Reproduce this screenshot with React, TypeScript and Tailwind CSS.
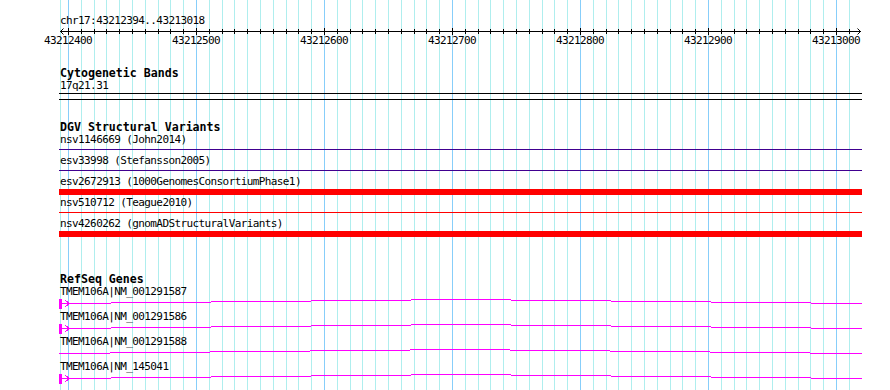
import React from 'react';

const MONO = "'DejaVu Sans Mono', 'Liberation Mono', monospace";

// 10bp per tick, 1.28px per bp, 43212400 sits at x=68
const ticks = Array.from({ length: 62 }, (_, k) => ({
  x: Math.round(68 + 12.8 * k),
  major: k % 10 === 0,
  label: 43212400 + k * 10,
}));

const variants = [
  { label: 'nsv1146669 (John2014)', color: 'bg-[#400090]', thick: false },
  { label: 'esv33998 (Stefansson2005)', color: 'bg-[#400090]', thick: false },
  { label: 'esv2672913 (1000GenomesConsortiumPhase1)', color: 'bg-[#ff0000]', thick: true },
  { label: 'nsv510712 (Teague2010)', color: 'bg-[#ff0000]', thick: false },
  { label: 'nsv4260262 (gnomADStructuralVariants)', color: 'bg-[#ff0000]', thick: true },
];

const genes = [
  { label: 'TMEM106A|NM_001291587', start: true, edges: [59, 111, 211, 311, 411, 511, 611, 711, 811, 862] },
  { label: 'TMEM106A|NM_001291586', start: true, edges: [59, 111, 211, 311, 411, 511, 611, 711, 811, 862] },
  { label: 'TMEM106A|NM_001291588', start: false, edges: [59, 110, 210, 310, 410, 510, 610, 710, 810, 862] },
  { label: 'TMEM106A|NM_145041', start: true, edges: [59, 111, 211, 311, 411, 511, 611, 711, 811, 862] },
];

const rise = [0, -1, -2, -3, -4, -3, -2, -1, 0];

function TrackTitle({ children, className = '' }: { children: React.ReactNode; className?: string }) {
  return (
    <div
      className={`ml-[60px] h-[13px] text-[11.6px] leading-[13px] font-bold whitespace-nowrap text-black font-['DejaVu_Sans_Mono',monospace] ${className}`}
    >
      {children}
    </div>
  );
}

function Label({ children }: { children: React.ReactNode }) {
  return (
    <div className="ml-[60px] h-[12px] text-[11px] leading-[12px] tracking-[-0.6px] whitespace-nowrap text-black font-['DejaVu_Sans_Mono',monospace]">
      {children}
    </div>
  );
}

function GeneGlyph({ edges, start }: { edges: number[]; start: boolean }) {
  return (
    <svg width={890} height={13} className="block" shapeRendering="crispEdges">
      {edges.slice(0, -1).map((x, i) => (
        <rect key={x} x={x} y={5 + rise[i]} width={edges[i + 1] - x} height={1} fill="#ff00ff" />
      ))}
      {start && (
        <>
          <rect x={59} y={1} width={3} height={10} fill="#ff00ff" />
          <polyline points="65.5,2.5 69.5,5.5 65.5,8.5" fill="none" stroke="#ff00ff" strokeWidth={1} />
        </>
      )}
    </svg>
  );
}

export default function App() {
  return (
    <div className="relative w-[890px] h-[390px] overflow-hidden bg-white">
      {/* grid behind the tracks */}
      <svg width={890} height={390} className="absolute inset-0" shapeRendering="crispEdges">
        <rect x={60} y={0} width={1} height={390} fill="#afeeee" />
        {ticks.map((t) => (
          <rect key={t.x} x={t.x} y={0} width={1} height={390} fill={t.major ? '#87cefa' : '#afeeee'} />
        ))}
      </svg>

      <div className="relative flex flex-col pt-[15px]">
        <Label>chr17:43212394..43213018</Label>

        {/* ruler */}
        <svg width={890} height={20} className="block">
          <g shapeRendering="crispEdges">
            <rect x={60} y={4} width={801} height={1} fill="#000" />
            {ticks.map((t) => (
              <rect key={t.x} x={t.x} y={t.major ? 1 : 2} width={1} height={t.major ? 7 : 5} fill="#000" />
            ))}
          </g>
          <polyline points="63.5,1.5 60.5,4.5 63.5,7.5" fill="none" stroke="#000" strokeWidth={1} />
          <polyline points="857.5,1.5 860.5,4.5 857.5,7.5" fill="none" stroke="#000" strokeWidth={1} />
          {ticks
            .filter((t) => t.major)
            .map((t) => (
              <text
                key={t.x}
                x={t.x}
                y={17}
                textAnchor="middle"
                fontFamily={MONO}
                fontSize={11}
                letterSpacing={-0.6}
                fill="#000"
              >
                {t.label}
              </text>
            ))}
        </svg>

        <TrackTitle className="mt-[20px]">Cytogenetic Bands</TrackTitle>
        <Label>17q21.31</Label>
        <div className="ml-[59px] mt-[1px] w-[803px] h-px bg-black" />
        <div className="ml-[59px] mt-[5px] w-[803px] h-px bg-black" />

        <TrackTitle className="mt-[21px]">DGV Structural Variants</TrackTitle>
        {variants.map((v) => (
          <div key={v.label} className="flex flex-col h-[21px]">
            <Label>{v.label}</Label>
            <div
              className={`ml-[59px] w-[803px] ${v.color} ${v.thick ? 'mt-[1px] h-[6px]' : 'mt-[3px] h-px'}`}
            />
          </div>
        ))}

        <TrackTitle className="mt-[34px]">RefSeq Genes</TrackTitle>
        {genes.map((g) => (
          <div key={g.label} className="flex flex-col h-[25px]">
            <Label>{g.label}</Label>
            <GeneGlyph edges={g.edges} start={g.start} />
          </div>
        ))}
      </div>
    </div>
  );
}
